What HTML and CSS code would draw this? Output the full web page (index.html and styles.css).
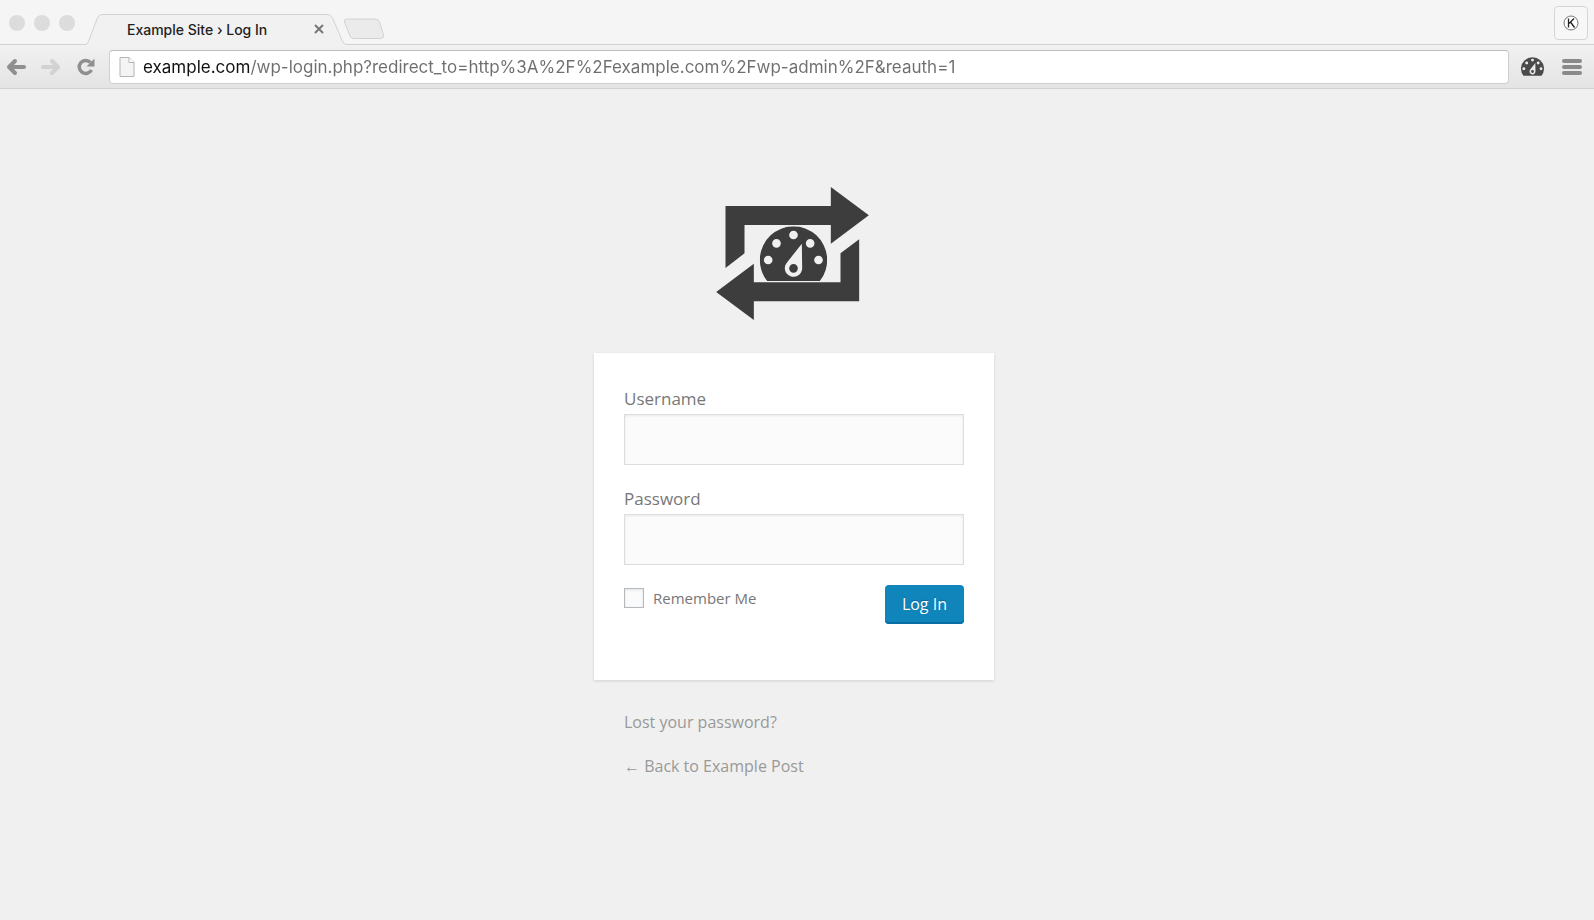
FILE: index.html
```html
<!DOCTYPE html>
<html lang="en">
<head>
  <meta charset="UTF-8">
  <meta name="viewport" content="width=device-width, initial-scale=1.0">
  <title>Example Site › Log In</title>
  <link rel="stylesheet" href="styles.css">
</head>
<body>
<svg class="defs" width="0" height="0" aria-hidden="true">
  <symbol id="gauge" viewBox="0 0 202 164">
    <path fill="currentColor" fill-rule="evenodd" d="M22 164A101 101 0 1 1 180 164ZM88 26a13 13 0 1 0 26 0a13 13 0 1 0-26 0ZM37 51a13 13 0 1 0 26 0a13 13 0 1 0-26 0ZM138 51a13 13 0 1 0 26 0a13 13 0 1 0-26 0ZM12 101a13 13 0 1 0 26 0a13 13 0 1 0-26 0ZM163 101a13 13 0 1 0 26 0a13 13 0 1 0-26 0ZM126 52L81 109A26 26 0 1 0 127 126ZM88 126a13 13 0 1 1 26 0a13 13 0 1 1-26 0Z"/>
  </symbol>
</svg>
<header class="browser">
  <div class="tabstrip">
    <div class="lights"><span class="light"></span><span class="light"></span><span class="light"></span></div>
    <div class="tab">
      <svg class="tab-shape" viewBox="0 0 262 32" aria-hidden="true">
        <path d="M0 30.5C3 30.5 3 28 4 26L12 5Q13.500 .5 18 .5H241Q246 .5 248 5L257 26C258 28 259 30.500 262 30.500V32H0Z" fill="#f1f1f1"/>
        <path d="M0 30.500C3 30.500 3 28 4 26L12 5Q13.500 .5 18 .5H241Q246 .5 248 5L257 26C258 28 259 30.500 262 30.500" fill="none" stroke="#d2d2d2"/>
      </svg>
      <span class="tab-title">Example Site › Log In</span>
      <button class="tab-close" aria-label="Close tab">
        <svg width="10" height="10" viewBox="0 0 10 10"><path d="M1 1l8 8M9 1l-8 8" stroke="#777" stroke-width="2"/></svg>
      </button>
    </div>
    <button class="new-tab" aria-label="New tab">
      <svg width="42" height="22" viewBox="0 0 42 22"><path d="M4 1H32Q35 1 36.500 4L40.500 17Q41 20 38 20.500H11Q8 20.500 7 18L1.500 4Q1 1 4 1Z" fill="#ebebeb" stroke="#d2d2d2"/></svg>
    </button>
    <button class="profile" aria-label="Profile">
      <svg width="16" height="16" viewBox="0 0 16 16"><circle cx="8" cy="8" r="7" fill="#fff" stroke="#777"/><path d="M5.500 3.500v9M11 3.500L6 8.500M7.500 7l4 5.500" fill="none" stroke="#222" stroke-width="1.300"/></svg>
    </button>
  </div>
  <div class="toolbar">
    <button class="tool" aria-label="Back">
      <svg width="20" height="18" viewBox="0 0 20 18"><path d="M9 3L3 9l6 6M4 9h14" fill="none" stroke="#8f8f8f" stroke-width="4" stroke-linecap="round" stroke-linejoin="round"/></svg>
    </button>
    <button class="tool" aria-label="Forward">
      <svg width="20" height="18" viewBox="0 0 20 18"><path d="M11 3l6 6-6 6M16 9H2" fill="none" stroke="#d2d2d2" stroke-width="4" stroke-linecap="round" stroke-linejoin="round"/></svg>
    </button>
    <button class="tool" aria-label="Reload">
      <svg width="20" height="18" viewBox="0 0 20 18"><path d="M14.500 4.500A6.500 6.500 0 1 0 15.500 12" fill="none" stroke="#8f8f8f" stroke-width="3.500"/><path d="M18.500 .5v8h-8Z" fill="#8f8f8f"/></svg>
    </button>
    <div class="omnibox">
      <svg class="page-icon" width="16" height="20" viewBox="0 0 16 20"><path d="M1 .5H10L15 5.500V19.500H1Z" fill="#f4f4f4" stroke="#b5b5b5"/><path d="M10 .5V5.500H15" fill="#fff" stroke="#b5b5b5"/></svg>
      <input type="text" class="url" aria-label="Address" spellcheck="false" value="example.com/wp-login.php?redirect_to=http%3A%2F%2Fexample.com%2Fwp-admin%2F&amp;reauth=1">
    </div>
    <button class="tool tool-gauge" aria-label="Dashboard">
      <svg width="23" height="19"><use href="#gauge"/></svg>
    </button>
    <button class="tool tool-menu" aria-label="Menu">
      <svg width="20" height="18" viewBox="0 0 20 18"><path d="M2 3h16M2 9h16M2 15h16" stroke="#8a8a8a" stroke-width="4" stroke-linecap="round"/></svg>
    </button>
  </div>
</header>
<main class="page">
  <svg class="logo" width="153" height="133" viewBox="48 51 458 399" aria-hidden="true">
    <path fill="currentColor" d="M76 108H392V51L506 136L392 221V165H133V250L76 294ZM477 208V394H161V450L48 366L161 281V337H421V250Z"/>
    <use href="#gauge" x="179" y="169" width="202" height="164"/>
  </svg>
  <form class="login">
    <label class="label" for="user">Username</label>
    <input type="text" class="field" id="user">
    <label class="label" for="pass">Password</label>
    <input type="password" class="field" id="pass">
    <div class="actions">
      <label class="remember"><input type="checkbox" class="check">Remember Me</label>
      <button type="button" class="submit">Log In</button>
    </div>
  </form>
  <nav class="links">
    <a href="#">Lost your password?</a>
    <a href="#">← Back to Example Post</a>
  </nav>
</main>
</body>
</html>
```
FILE: styles.css
```css
* {
  box-sizing: border-box;
}

body {
  margin: 0;
  min-height: 100vh;
  background: #f0f0f0;
  font-family: "Open Sans", sans-serif;
}

button {
  display: flex;
  align-items: center;
  justify-content: center;
  padding: 0;
  border: none;
  background: none;
}

.defs {
  position: absolute;
}

.browser {
  font-family: Inter, sans-serif;
}

/* tabs */
.tabstrip {
  display: flex;
  height: 45px;
  padding: 0 6px 0 9px;
  background: #f5f5f5;
  border-bottom: 1px solid #d2d2d2;
}

.lights {
  display: flex;
  gap: 9px;
  padding-top: 15px;
}

.light {
  width: 16px;
  height: 16px;
  border-radius: 50%;
  background: #dcdcdc;
}

.tab {
  position: relative;
  display: flex;
  align-items: center;
  justify-content: space-between;
  width: 262px;
  height: 32px;
  margin: 14px 0 0 10px;
  padding: 0 23px 2px 42px;
}

.tab-shape {
  position: absolute;
  top: 0;
  left: 0;
  width: 100%;
  height: 100%;
}

.tab-title {
  position: relative;
  font-size: 14px;
  font-weight: 500;
  color: #222;
}

.tab-close {
  position: relative;
}

.new-tab {
  align-self: flex-start;
  margin: 18px auto 0 -4px;
}

.profile {
  width: 34px;
  height: 34px;
  margin-top: 6px;
  background: #f7f7f7;
  border: 1px solid #d6d6d6;
  border-radius: 4px;
}

/* address bar */
.toolbar {
  display: flex;
  align-items: center;
  gap: 15px;
  height: 44px;
  padding: 0 12px 0 6px;
  background: linear-gradient(#f1f1f1, #e4e4e4);
  border-bottom: 1px solid #d2d2d2;
}

.omnibox {
  display: flex;
  flex: 1;
  align-items: center;
  gap: 8px;
  height: 34px;
  margin-left: -2px;
  padding: 0 9px;
  background: #fff;
  border: 1px solid #cfcfcf;
  border-top-color: #bdbdbd;
  border-radius: 4px;
}

.tool-gauge {
  color: #4a4a4a;
  margin: 0 3px 0 -3px;
}

/* the host is darker than the rest of the address */
.url {
  flex: 1;
  min-width: 0;
  padding: 0;
  border: none;
  outline: none;
  font: 17px Inter, sans-serif;
  color: transparent;
  background: linear-gradient(90deg, #111 107px, #6e6e6e 107px);
  -webkit-background-clip: text;
  background-clip: text;
}

/* login page */
.page {
  display: flex;
  flex-direction: column;
  align-items: center;
  padding: 98px 6px 40px 0;
}

.logo {
  color: #3d3d3d;
  margin-right: 3px;
}

.login {
  display: flex;
  flex-direction: column;
  width: 400px;
  max-width: 100%;
  margin-top: 33px;
  padding: 34px 30px 56px;
  background: #fff;
  box-shadow: 0 1px 3px rgba(0, 0, 0, 0.13);
}

.label {
  font-size: 17px;
  line-height: 24px;
  margin-bottom: 3px;
  color: #777;
}

.field {
  height: 51px;
  margin-bottom: 22px;
  padding: 4px 8px;
  border: 1px solid #ddd;
  background: #fbfbfb;
  box-shadow: inset 0 1px 3px rgba(0, 0, 0, 0.08);
  font-size: 24px;
}

.actions {
  display: flex;
  justify-content: space-between;
  align-items: flex-start;
  margin-top: -2px;
}

.remember {
  display: flex;
  align-items: center;
  gap: 9px;
  font-size: 15px;
  line-height: 26px;
  color: #777;
}

.check {
  appearance: none;
  width: 20px;
  height: 20px;
  margin: 0;
  border: 1px solid #b4b9be;
  background: #fbfbfb;
  box-shadow: inset 0 1px 3px rgba(0, 0, 0, 0.1);
}

.submit {
  height: 39px;
  padding: 0 17px 2px;
  border-radius: 4px;
  background: #1085bb;
  box-shadow: inset 0 -2px 0 #0a6ea5;
  color: #fff;
  font: 16px "Open Sans", sans-serif;
  text-shadow: 0 -1px 1px #006799;
}

.links {
  display: flex;
  flex-direction: column;
  gap: 20px;
  width: 400px;
  max-width: 100%;
  padding: 30px 30px 0;
  font-size: 16px;
  line-height: 24px;
}

.links a {
  color: #999;
  text-decoration: none;
}
```
